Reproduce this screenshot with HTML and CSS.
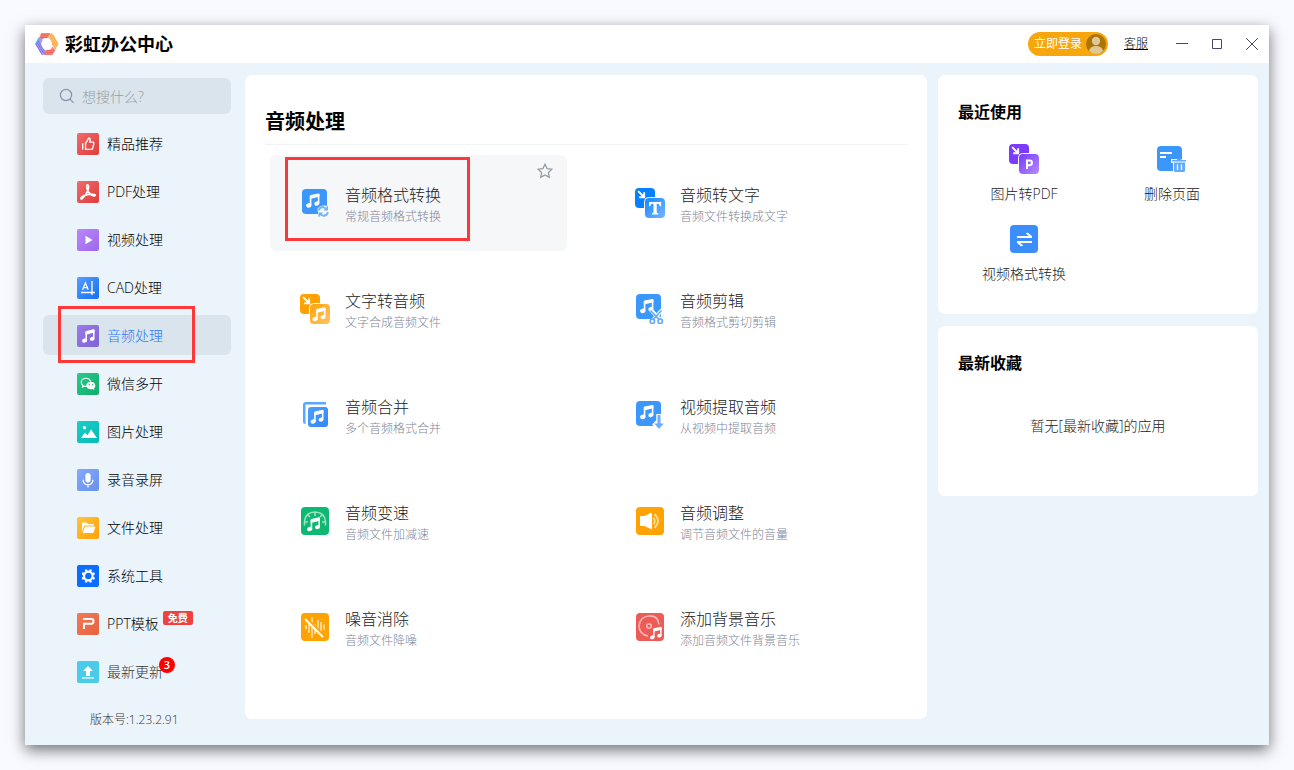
FILE: index.html
```html
<!DOCTYPE html>
<html lang="zh-CN">
<head>
<meta charset="utf-8">
<meta name="viewport" content="width=device-width, initial-scale=1">
<title>彩虹办公中心</title>
<link rel="stylesheet" href="styles.css">
</head>
<body>
<svg class="defs" width="0" height="0" aria-hidden="true">
  <defs>
    <linearGradient id="g-red" x1="0" y1="0" x2="1" y2="1"><stop offset="0" stop-color="#ef6b6b"/><stop offset="1" stop-color="#e13c3c"/></linearGradient>
    <linearGradient id="g-violet" x1="0" y1="0" x2="1" y2="1"><stop offset="0" stop-color="#bb85fb"/><stop offset="1" stop-color="#9b69ea"/></linearGradient>
    <linearGradient id="g-blue" x1="0" y1="0" x2="1" y2="1"><stop offset="0" stop-color="#5a9cff"/><stop offset="1" stop-color="#1170f2"/></linearGradient>
    <linearGradient id="g-purple" x1="0" y1="0" x2="1" y2="1"><stop offset="0" stop-color="#9a7be6"/><stop offset="1" stop-color="#7f62d8"/></linearGradient>
    <linearGradient id="g-green" x1="0" y1="0" x2="1" y2="1"><stop offset="0" stop-color="#2cc98a"/><stop offset="1" stop-color="#0fae6a"/></linearGradient>
    <linearGradient id="g-teal" x1="0" y1="0" x2="1" y2="1"><stop offset="0" stop-color="#17cfc9"/><stop offset="1" stop-color="#09b9b5"/></linearGradient>
    <linearGradient id="g-sky" x1="0" y1="0" x2="1" y2="1"><stop offset="0" stop-color="#84a8fb"/><stop offset="1" stop-color="#6791ec"/></linearGradient>
    <linearGradient id="g-amber" x1="0" y1="0" x2="1" y2="1"><stop offset="0" stop-color="#ffc53a"/><stop offset="1" stop-color="#ff9f05"/></linearGradient>
    <linearGradient id="g-coral" x1="0" y1="0" x2="1" y2="1"><stop offset="0" stop-color="#f27a58"/><stop offset="1" stop-color="#e6623f"/></linearGradient>
    <linearGradient id="g-front-o" x1="0" y1="0" x2="1" y2="1"><stop offset="0" stop-color="#ffa303"/><stop offset="1" stop-color="#ffc469"/></linearGradient>
    <linearGradient id="g-front-b" x1="0" y1="0" x2="1" y2="1"><stop offset="0" stop-color="#1286ff"/><stop offset="1" stop-color="#7ab6ff"/></linearGradient>
    <linearGradient id="g-front-p" x1="0" y1="0" x2="1" y2="1"><stop offset="0" stop-color="#7436ff"/><stop offset="1" stop-color="#b78dff"/></linearGradient>
    <linearGradient id="g-back" x1="0" y1="0" x2="1" y2="1"><stop offset="0" stop-color="#4ba0ff"/><stop offset="1" stop-color="#3486fb"/></linearGradient>
    <symbol id="note" viewBox="0 0 16 16">
      <path d="M5.600 12.600V4.400L13.600 2.400V10.800" fill="none" stroke="#fff" stroke-width="1.600"/>
      <path d="M4.800 3.600Q4.800 2.800 5.600 2.600L13.400.9Q14.400.8 14.400 1.700V4.300L4.800 6.600z" fill="#fff"/>
      <ellipse cx="3.800" cy="12.900" rx="2.700" ry="2.200" transform="rotate(-15 3.800 12.900)" fill="#fff"/>
      <ellipse cx="11.900" cy="11" rx="2.600" ry="2.100" transform="rotate(-15 11.900 11)" fill="#fff"/>
    </symbol>
    <symbol id="arrow-in" viewBox="0 0 12 12">
      <path d="M2 2L9 9M9.200 3.300V9.200H3.300" fill="none" stroke="#fff" stroke-width="2.300"/>
    </symbol>
  </defs>
</svg>

<div class="window">
  <header class="titlebar">
    <svg class="logo" viewBox="0 0 24 24" aria-hidden="true">
      <path d="M6 1.200H15L12.500 6H9L6.500 8.500 4.500 5z" fill="#f58a80"/>
      <path d="M15 1.200L18.200 2 23.800 12 20.400 18 17 13 16.500 8 12.500 5.500z" fill="#fbc57c"/>
      <path d="M20.400 18L17.500 22.800H9L11 18.500 15.500 17.500 17.500 14.500z" fill="#f58a80"/>
      <path d="M4.500 5L.3 12 6.800 22.800H9.500L11 18.500 7.500 16.500 5.800 12 7.500 8.500z" fill="#a69cf0"/>
      <g fill="none" stroke-width=".7">
        <path d="M6.500 2H15M6 3.800H14M5 5.600H12.500M9 22.200h8.400M9.800 20.400h8.800M11 18.600h8.600" stroke="#ee4b4b"/>
        <path d="M16 1.300l6.600 11M15 3l6.600 11M15 6.400l6 10.600" stroke="#f49a2c"/>
        <path d="M.8 12.200l6.400 10.600M2 10.400l6.800 11M3 8.700l6.600 10.600" stroke="#6455e0"/>
        <path d="M4.400 5.600L.6 12" stroke="#4db4ee" stroke-width="1.400"/>
      </g>
    </svg>
    <h1 class="app-name">彩虹办公中心</h1>
    <button class="login" type="button">立即登录
      <svg class="avatar" viewBox="0 0 20 20" aria-hidden="true"><circle cx="10" cy="10" r="10" fill="#ab7406"/><circle cx="10" cy="7" r="4.200" fill="#e0c795"/><path d="M3 16.500C4 13.400 6.600 12 10 12s6 1.400 7 4.500Q14.200 20 10 20T3 16.500z" fill="#e0c795"/></svg>
    </button>
    <a class="service" href="#service">客服</a>
    <div class="controls">
      <button class="control" type="button" aria-label="最小化"><svg viewBox="0 0 14 14"><path d="M1 6.500H13"/></svg></button>
      <button class="control" type="button" aria-label="最大化"><svg viewBox="0 0 14 14"><path d="M2.500 2.500H11.500V11.500H2.500z"/></svg></button>
      <button class="control" type="button" aria-label="关闭"><svg viewBox="0 0 14 14"><path d="M1.200 1.200L12.800 12.800M12.800 1.200L1.200 12.800"/></svg></button>
    </div>
  </header>

  <div class="content">
    <aside class="sidebar">
      <label class="search">
        <svg class="search-icon" viewBox="0 0 16 16" aria-hidden="true"><circle cx="7" cy="7" r="5.600"/><path d="M11 11.200L14.600 14.800"/></svg>
        <input class="search-input" type="text" placeholder="想搜什么?" aria-label="搜索">
      </label>
      <nav class="nav">
        <a class="nav-item" href="#featured"><svg class="nav-icon" viewBox="0 0 22 22"><rect width="22" height="22" rx="2" fill="url(#g-red)"/><path d="M8.500 10.300L11 6.500Q11.300 4.800 12.500 5.200 13.800 5.800 12.600 9.200H16Q17.200 9.500 16.800 10.800L15.600 15.500Q15.300 16.400 14.400 16.400H8.500zM5.700 10.300V16.500" fill="none" stroke="#fff" stroke-width="1.300" stroke-linejoin="round"/></svg>精品推荐</a>
        <a class="nav-item" href="#pdf"><svg class="nav-icon" viewBox="0 0 22 22"><rect width="22" height="22" rx="2" fill="url(#g-red)"/><path d="M10.400 3.800Q12.300 4 11.200 8.600 9.500 14 5.200 17.700 3.600 18.400 3.800 17 5 14.600 12 13.400 17.600 12.800 18.400 14 18.300 15.500 15.400 14.600 11.600 12.600 10.300 8.600 9 4.300 10.400 3.800z" fill="none" stroke="#fff" stroke-width="1.600" stroke-linejoin="round"/></svg>PDF处理</a>
        <a class="nav-item" href="#video"><svg class="nav-icon" viewBox="0 0 22 22"><rect width="22" height="22" rx="2" fill="url(#g-violet)"/><path d="M8.500 6.800L15.500 11 8.500 15.200z" fill="#fff"/></svg>视频处理</a>
        <a class="nav-item" href="#cad"><svg class="nav-icon" viewBox="0 0 22 22"><rect width="22" height="22" rx="2" fill="url(#g-blue)"/><path d="M4 15.500H18M15 4V18" fill="none" stroke="#fff" stroke-width="1.300"/><path d="M5.600 12.800L8.400 6 11.200 12.800M6.600 10.600H10.200" fill="none" stroke="#fff" stroke-width="1.300"/></svg>CAD处理</a>
        <a class="nav-item active" href="#audio" aria-current="page"><svg class="nav-icon" viewBox="0 0 22 22"><rect width="22" height="22" rx="2" fill="url(#g-purple)"/><use href="#note" x="4" y="3.500" width="15" height="15"/></svg>音频处理<span class="mark mark-nav"></span></a>
        <a class="nav-item" href="#wechat"><svg class="nav-icon" viewBox="0 0 22 22"><rect width="22" height="22" rx="2" fill="url(#g-green)"/><path d="M9 5.200C6.200 5.200 4.200 7 4.200 9.300c0 1.300.7 2.400 1.800 3.200l-.4 1.500 2-.9q1 .3 2.200.2M13.600 8.500C13 6.500 11.200 5.200 9 5.200" fill="none" stroke="#fff" stroke-width="1.100"/><path d="M13.800 8.700c-2.600 0-4.500 1.700-4.500 3.800s2 3.800 4.500 3.800q1 0 1.800-.3l1.800.9-.4-1.500c.8-.7 1.300-1.700 1.300-2.900 0-2.100-2-3.800-4.500-3.800z" fill="#fff"/><g fill="#20bd7c"><circle cx="12.300" cy="11.800" r=".7"/><circle cx="15.400" cy="11.800" r=".7"/></g></svg>微信多开</a>
        <a class="nav-item" href="#image"><svg class="nav-icon" viewBox="0 0 22 22"><rect width="22" height="22" rx="2" fill="url(#g-teal)"/><path d="M4 17L8 11.500 10.300 14.200 14 8.500 20 17z" fill="#fff"/><circle cx="7.500" cy="6.800" r="1.700" fill="#fff"/></svg>图片处理</a>
        <a class="nav-item" href="#record"><svg class="nav-icon" viewBox="0 0 22 22"><rect width="22" height="22" rx="2" fill="url(#g-sky)"/><rect x="8.400" y="4" width="5.200" height="9.400" rx="2.600" fill="#fff"/><path d="M6 10.800Q6.500 15.800 11 15.800T16 10.800M11 15.800V18.600" fill="none" stroke="#fff" stroke-width="1.300"/></svg>录音录屏</a>
        <a class="nav-item" href="#file"><svg class="nav-icon" viewBox="0 0 22 22"><rect width="22" height="22" rx="2" fill="url(#g-amber)"/><path d="M5 15V6.200Q5 5.500 5.700 5.500H9.500L11 7H16Q16.800 7 16.800 7.800V8.600H7.800Q7 8.600 6.700 9.400z" fill="#fff"/><path d="M8 9.500H18.400L16.700 15.300Q16.500 16 15.800 16H5.800z" fill="#fff"/></svg>文件处理</a>
        <a class="nav-item" href="#system"><svg class="nav-icon" viewBox="0 0 22 22"><rect width="22" height="22" rx="2" fill="#0a6dff"/><circle cx="11.300" cy="11" r="4.300" fill="none" stroke="#fff" stroke-width="2.200"/><g stroke="#fff" stroke-width="2.400"><path d="M9.100 4.500V6.500M13.500 4.500V6.500M9.100 15.500V17.500M13.500 15.500V17.500M5 8.800H7M5 13.200H7M15.600 8.800H17.600M15.600 13.200H17.600"/></g></svg>系统工具</a>
        <a class="nav-item" href="#ppt"><svg class="nav-icon" viewBox="0 0 22 22"><rect width="22" height="22" rx="2" fill="url(#g-coral)"/><path d="M6 6H14.500Q16.500 6 16.500 8.300T14.500 10.700H7V16" fill="none" stroke="#fff" stroke-width="2"/></svg>PPT模板<span class="tag">免费</span></a>
        <a class="nav-item muted" href="#updates"><svg class="nav-icon" viewBox="0 0 22 22"><rect width="22" height="22" rx="2" fill="#4bcbea"/><path d="M11 5L16 10H13V15H9V10H6z" fill="#fff"/><path d="M5 17H17" stroke="#fff" stroke-width="1.200"/></svg><span class="counted">最新更新<span class="count">3</span></span></a>
      </nav>
      <p class="version">版本号:1.23.2.91</p>
    </aside>

    <main class="main panel">
      <h2 class="main-title">音频处理</h2>
      <div class="tools">
        <article class="tool selected">
          <svg class="tool-icon" viewBox="0 0 30 30"><rect x="2" y="1" width="25" height="25" rx="4" fill="#3b97fb"/><use href="#note" x="5" y="4.500" width="16" height="16"/><path d="M17.500 20.500Q20 17 24 17.500L29 18V29H18.500z" fill="#f6f7f9"/><g fill="none" stroke="#72b4fc" stroke-width="1.900"><path d="M18.500 22.500Q20 18.600 23.500 19.100L26.500 21M28 24.300Q26.500 28.200 23 27.700L20 26"/></g><path d="M28 17.500V22.500H23.500zM18.500 29.500V24.500H23z" fill="#72b4fc"/></svg>
          <a class="tool-text" href="#convert"><span class="tool-name">音频格式转换</span><span class="tool-desc">常规音频格式转换</span></a>
          <button class="star" type="button" aria-label="收藏"><svg viewBox="0 0 16 16"><path d="M8 1.200L10.100 5.600 14.900 6.200 11.400 9.500 12.300 14.300 8 12 3.700 14.300 4.600 9.500 1.100 6.200 5.900 5.600z"/></svg></button>
          <span class="mark mark-tool"></span>
        </article>
        <article class="tool">
          <svg class="tool-icon" viewBox="0 0 30 30"><rect width="20" height="20" rx="4" fill="#0780ff"/><use href="#arrow-in" x="1.500" y="1.500" width="10" height="10"/><rect x="9.500" y="9.500" width="21" height="21" rx="4" fill="url(#g-front-b)" stroke="#fff"/><path d="M14 14H26.200V18.200H24.900Q24.600 15.800 22.500 15.800H21.700V24.300Q21.700 25.200 23.200 25.200V26.500H17V25.200Q18.500 25.200 18.500 24.300V15.800H17.700Q15.600 15.800 15.300 18.200H14z" fill="#fff"/></svg>
          <a class="tool-text" href="#to-text"><span class="tool-name">音频转文字</span><span class="tool-desc">音频文件转换成文字</span></a>
        </article>
        <article class="tool">
          <svg class="tool-icon" viewBox="0 0 30 30"><rect width="20" height="20" rx="4" fill="#ffa101"/><use href="#arrow-in" x="1.500" y="1.500" width="10" height="10"/><rect x="9.500" y="9.500" width="21" height="21" rx="4" fill="url(#g-front-o)" stroke="#fff"/><use href="#note" x="11.500" y="12.500" width="15.500" height="15.500"/></svg>
          <a class="tool-text" href="#to-audio"><span class="tool-name">文字转音频</span><span class="tool-desc">文字合成音频文件</span></a>
        </article>
        <article class="tool">
          <svg class="tool-icon" viewBox="0 0 30 30"><rect x="1" width="25" height="25" rx="4" fill="#3b97fb"/><use href="#note" x="4" y="4" width="16" height="16"/><path d="M16 16L25 26M27 16L18 26" stroke="#fff" stroke-width="4"/><g fill="none" stroke="#65adfc" stroke-width="1.700"><path d="M15.500 16.500L24 25.300M26.500 16.500L18.500 25.300"/><circle cx="17.300" cy="27.300" r="2.200" fill="#fff"/><circle cx="25.200" cy="27.300" r="2.200" fill="#fff"/></g></svg>
          <a class="tool-text" href="#cut"><span class="tool-name">音频剪辑</span><span class="tool-desc">音频格式剪切剪辑</span></a>
        </article>
        <article class="tool">
          <svg class="tool-icon" viewBox="0 0 30 30"><path d="M6 2H26V4.500H5.500V24H5Q3 24 3 22V5Q3 2 6 2z" fill="#57a8ff"/><rect x="8" y="7" width="20" height="20" rx="3" fill="url(#g-back)"/><use href="#note" x="9.500" y="9" width="15.500" height="15.500"/></svg>
          <a class="tool-text" href="#merge"><span class="tool-name">音频合并</span><span class="tool-desc">多个音频格式合并</span></a>
        </article>
        <article class="tool">
          <svg class="tool-icon" viewBox="0 0 30 30"><rect x="1" y="1" width="25" height="25" rx="4" fill="#3b97fb"/><use href="#note" x="4" y="4" width="16" height="16"/><path d="M24 14V25.500M19 22.500L24 27.500 29 22.500" fill="none" stroke="#fff" stroke-width="5.500"/><path d="M22.500 15H25.500V23.500H28.800L24 29 19.200 23.500H22.500z" fill="#69affc"/></svg>
          <a class="tool-text" href="#extract"><span class="tool-name">视频提取音频</span><span class="tool-desc">从视频中提取音频</span></a>
        </article>
        <article class="tool">
          <svg class="tool-icon" viewBox="0 0 30 30"><rect x="1" y="1" width="28" height="28" rx="4" fill="#0fb872"/><path d="M4.500 19.500V15.500Q5.500 6 15 6T25.500 15.500V19.500M15 6.500V10M5 16H8M22 16H25.500M8 9L10 11M22 9L20 11" fill="none" stroke="#9be2c3" stroke-width="1.600"/><use href="#note" x="6" y="10.500" width="15.500" height="15.500"/></svg>
          <a class="tool-text" href="#speed"><span class="tool-name">音频变速</span><span class="tool-desc">音频文件加减速</span></a>
        </article>
        <article class="tool">
          <svg class="tool-icon" viewBox="0 0 30 30"><rect x="1" y="1" width="28" height="28" rx="4" fill="#ffa303"/><path d="M5 11Q5 10 6 10H9.500L16.200 6.700Q17 6.500 17 7.300V22.700Q17 23.500 16.200 23.300L9.500 20H6Q5 20 5 19z" fill="#fff"/><path d="M18.500 11.500Q21 15 18.500 18.500M19.500 8.200Q26.500 15 19.500 21.800" fill="none" stroke="#ffe0a6" stroke-width="1.700"/></svg>
          <a class="tool-text" href="#adjust"><span class="tool-name">音频调整</span><span class="tool-desc">调节音频文件的音量</span></a>
        </article>
        <article class="tool">
          <svg class="tool-icon" viewBox="0 0 30 30"><rect x="1" y="1" width="28" height="28" rx="4" fill="#ffa303"/><path d="M6 13V17M9 10V21M12 5V26M15 12V22M18 8V19M21 10V21M24 12.500V18" stroke="#ffdc9d" stroke-width="1.800"/><path d="M6.500 6L24 23.500" stroke="#ffa303" stroke-width="2"/><path d="M5 7L23 25" stroke="#fff" stroke-width="1.900"/></svg>
          <a class="tool-text" href="#denoise"><span class="tool-name">噪音消除</span><span class="tool-desc">音频文件降噪</span></a>
        </article>
        <article class="tool">
          <svg class="tool-icon" viewBox="0 0 30 30"><rect x="1" y="1" width="28" height="28" rx="4" fill="#ec5b56"/><path d="M13 24Q4.500 22.500 4 14 5 4.500 14 4T24 12.500" fill="none" stroke="#f8b5b3" stroke-width="1.700"/><circle cx="14" cy="14" r="2.200" fill="none" stroke="#f8b5b3" stroke-width="1.700"/><use href="#note" x="14" y="14" width="14" height="14"/></svg>
          <a class="tool-text" href="#bgm"><span class="tool-name">添加背景音乐</span><span class="tool-desc">添加音频文件背景音乐</span></a>
        </article>
      </div>
    </main>

    <aside class="side">
      <section class="panel recent">
        <h2 class="side-title">最近使用</h2>
        <div class="recent-grid">
          <a class="recent-item" href="#img-pdf"><svg class="recent-icon" viewBox="0 0 30 30"><rect width="20" height="20" rx="4" fill="#7a3bff"/><use href="#arrow-in" x="1.500" y="1.500" width="10" height="10"/><rect x="9.500" y="9.500" width="21" height="21" rx="4" fill="url(#g-front-p)" stroke="#fff"/><path d="M18 25V16.500H20.500Q23 16.500 23 18.800T20.500 21.200H18" fill="none" stroke="#fff" stroke-width="2"/></svg>图片转PDF</a>
          <a class="recent-item" href="#del-page"><svg class="recent-icon" viewBox="0 0 30 30"><rect y="2" width="25" height="25" rx="4" fill="#3b97fb"/><path d="M3 9H15M3 13H9" stroke="#fff" stroke-width="1.800"/><path d="M14 15H30V29H16V19H14z" fill="#fff"/><path d="M17 18.500H28V26.500Q28 28 26.500 28H18.500Q17 28 17 26.500z" fill="#62abfc"/><path d="M15 16.700H29M20 15.500H24.500" stroke="#62abfc" stroke-width="1.400"/><path d="M20.500 20.500V26M24.500 20.500V26" stroke="#fff" stroke-width="1.300"/></svg>删除页面</a>
          <a class="recent-item" href="#video-convert"><svg class="recent-icon" viewBox="0 0 30 30"><rect x="1" y="1" width="28" height="28" rx="4" fill="#3c8efd"/><path d="M8 13H23M18 9V9.200L22 12.500M23 18H8M13 22V21.800L9 18.500" fill="none" stroke="#fff" stroke-width="2"/></svg>视频格式转换</a>
        </div>
      </section>
      <section class="panel favourites">
        <h2 class="side-title">最新收藏</h2>
        <p class="empty">暂无[最新收藏]的应用</p>
      </section>
    </aside>
  </div>
</div>
</body>
</html>
```

FILE: styles.css
```css
* {
  box-sizing: border-box;
}

body {
  margin: 0;
  padding: 25px;
  min-height: 100vh;
  display: flex;
  background: #f8faff;
  color: #000;
  font-family: "Open Sans", "Noto Sans CJK SC", sans-serif;
  font-size: 14px;
  font-weight: 300;
  line-height: 20px;
}

h1, h2, p {
  margin: 0;
}

a {
  color: inherit;
  text-decoration: none;
}

button {
  padding: 0;
  border: 0;
  background: none;
  font: inherit;
  cursor: pointer;
}

svg {
  display: block;
  flex: none;
}

.defs {
  position: absolute;
}

.window {
  flex: 1;
  min-width: 0;
  display: flex;
  flex-direction: column;
  background: #ebf3fb;
  box-shadow: 0 5px 14px rgba(0, 0, 0, 0.55);
}

.titlebar {
  height: 38px;
  padding: 0 4px 0 10px;
  display: flex;
  align-items: center;
  background: #fff;
}

.logo {
  width: 24px;
  height: 24px;
}

.app-name {
  margin: 0 auto 0 6px;
  font-size: 18px;
  line-height: 24px;
  font-weight: 700;
}

.login {
  height: 24px;
  padding: 0 2px 0 6px;
  display: flex;
  align-items: center;
  gap: 4px;
  border-radius: 12px;
  background: #f7a70b;
  color: #fff;
  font-size: 12px;
  font-weight: 400;
}

.avatar {
  width: 20px;
  height: 20px;
}

.service {
  margin: 0 21px 0 16px;
  font-size: 12px;
  text-decoration: underline;
}

.controls {
  display: flex;
  gap: 9px;
}

.control {
  width: 26px;
  height: 26px;
  display: grid;
  place-items: center;
}

.control svg {
  width: 14px;
  height: 14px;
  fill: none;
  stroke: #44496a;
}

.content {
  flex: 1;
  display: flex;
  padding-right: 11px;
}

.sidebar {
  width: 220px;
  flex: none;
  padding: 15px 14px 0 18px;
}

.search {
  height: 36px;
  padding: 0 16px;
  display: flex;
  align-items: center;
  gap: 7px;
  border-radius: 6px;
  background: #d9e4ec;
}

.search-icon {
  width: 16px;
  height: 16px;
  fill: none;
  stroke: #8790ae;
  stroke-width: 1.2;
}

.search-input {
  flex: 1;
  min-width: 0;
  padding: 2px 0 0;
  border: 0;
  outline: 0;
  background: none;
  font: inherit;
}

.search-input::placeholder {
  color: #999c9e;
  opacity: 1;
}

.nav {
  margin-top: 9px;
  display: flex;
  flex-direction: column;
  gap: 8px;
}

.nav-item {
  position: relative;
  height: 40px;
  padding: 2px 0 0 34px;
  display: flex;
  align-items: center;
  border-radius: 6px;
}

.nav-icon {
  width: 22px;
  height: 22px;
  margin-right: 8px;
}

.active {
  background: #d9e4ec;
  color: #2d7af6;
}

.muted {
  color: #333;
}

.tag {
  align-self: flex-start;
  margin: 6px 0 0 4px;
  padding: 0 5px;
  border-radius: 2px;
  background: #f04141;
  color: #fff;
  font-size: 10px;
  line-height: 14px;
  font-weight: 700;
}

.counted {
  position: relative;
}

.count {
  position: absolute;
  top: -5px;
  right: -12px;
  width: 16px;
  height: 16px;
  border-radius: 50%;
  background: #f00;
  color: #fff;
  font-size: 11px;
  line-height: 16px;
  font-weight: 600;
  text-align: center;
}

.mark {
  position: absolute;
  border: 3px solid #fb3939;
  pointer-events: none;
}

.mark-nav {
  top: -9px;
  left: 15px;
  width: 137px;
  height: 57px;
}

.mark-tool {
  top: 2px;
  left: 15px;
  width: 185px;
  height: 84px;
}

.version {
  margin: 19px 0 0 47px;
  color: #333;
  font-size: 12px;
}

.panel {
  border-radius: 7px;
  background: #fff;
}

.main {
  flex: 1;
  min-width: 0;
  margin: 12px 11px 26px 0;
  padding: 33px 19px 0 20px;
}

.main-title {
  padding-bottom: 8px;
  border-bottom: 1px solid #f1f2f4;
  font-size: 20px;
  line-height: 28px;
  font-weight: 700;
}

.tools {
  padding: 10px 6px 0 5px;
  display: grid;
  grid-template-columns: 1fr 1fr;
  gap: 10px 38px;
}

.tool {
  position: relative;
  height: 96px;
  padding-left: 30px;
  display: flex;
  align-items: center;
  gap: 15px;
  border-radius: 6px;
}

.selected {
  background: #f6f7f9;
}

.tool-icon {
  width: 30px;
  height: 30px;
}

.tool-text {
  padding-top: 4px;
  display: flex;
  flex-direction: column;
}

.tool-name {
  color: #222;
  font-size: 16px;
  line-height: 24px;
}

.tool-desc {
  color: #7f8596;
  font-size: 12px;
  line-height: 20px;
}

.star {
  margin: 8px 14px 0 auto;
  align-self: flex-start;
}

.star svg {
  width: 16px;
  height: 16px;
  fill: none;
  stroke: #9299a6;
  stroke-width: 1.2;
}

.side {
  width: 320px;
  flex: none;
  padding-top: 12px;
  display: flex;
  flex-direction: column;
  gap: 12px;
}

.recent {
  padding: 25px 12px 30px;
}

.side-title {
  padding-left: 8px;
  font-size: 16px;
  line-height: 24px;
  font-weight: 700;
}

.recent-grid {
  margin-top: 20px;
  display: grid;
  grid-template-columns: 1fr 1fr;
  gap: 20px 0;
}

.recent-item {
  display: flex;
  flex-direction: column;
  align-items: center;
  gap: 10px;
  color: #222;
}

.recent-icon {
  width: 30px;
  height: 30px;
}

.favourites {
  padding: 25px 12px 60px;
}

.empty {
  margin-top: 41px;
  color: #222;
  text-align: center;
}
```
